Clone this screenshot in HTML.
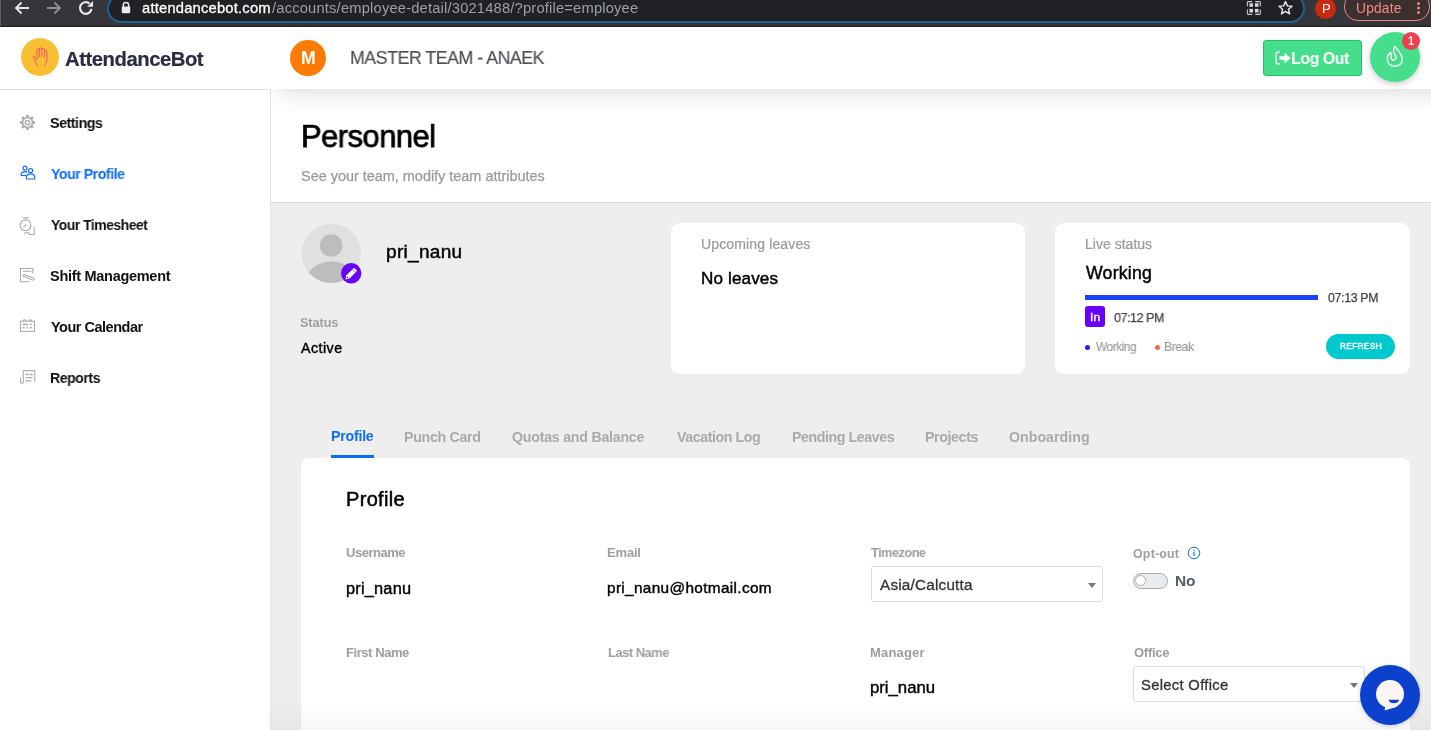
<!DOCTYPE html>
<html><head><meta charset="utf-8"><style>
html,body{margin:0;padding:0;width:1431px;height:730px;overflow:hidden;background:#fff;position:relative}
body{font-family:"Liberation Sans",sans-serif}
.t{position:absolute;white-space:nowrap;line-height:1;font-family:"Liberation Sans",sans-serif;will-change:transform}
</style></head><body>
<div style="position:absolute;left:0;top:0;width:1431px;height:26px;background:#35363a"></div>
<div style="position:absolute;left:0;top:26px;width:1431px;height:1px;background:#1d1d1f"></div>
<div style="position:absolute;left:0;top:0;width:1px;height:26px;background:#5c5d61"></div>
<div style="position:absolute;left:107px;top:-6px;width:1194px;height:25px;border:2px solid #1f6099;border-radius:14.5px;background:#202124"></div>
<svg style="position:absolute;left:0;top:0" width="110" height="26" viewBox="0 0 110 26">
<g fill="none" stroke="#e8eaed" stroke-width="1.8" stroke-linecap="butt">
<path d="M29 8H16M21.5 2.5L16 8l5.5 5.5"/>
</g>
<g fill="none" stroke="#8e9093" stroke-width="1.8">
<path d="M47 8H60M54.5 2.5L60 8l-5.5 5.5"/>
</g>
<path d="M91.5 8.9A5.8 5.8 0 1 1 89.5 3.5" fill="none" stroke="#e8eaed" stroke-width="2.2"/>
<path d="M93 1V6.8H87z" fill="#e8eaed"/>
</svg>
<svg style="position:absolute;left:120px;top:1px" width="12" height="13" viewBox="0 0 12 13">
<path d="M3.3 6V4.3a2.7 2.7 0 0 1 5.4 0V6" fill="none" stroke="#e8eaed" stroke-width="1.5"/>
<rect x="1.8" y="5.6" width="8.4" height="6.6" rx="1" fill="#e8eaed"/></svg>
<div class="t" style="left:142px;top:1px;font-size:14.72px;letter-spacing:0.212px;font-weight:normal;color:#ffffff;-webkit-text-stroke:0.3px #ffffff;">attendancebot.com</div>
<div class="t" style="left:271.5px;top:1px;font-size:14.72px;letter-spacing:0.18px;font-weight:normal;color:#9aa0a6;">/accounts/employee-detail/3021488/?profile=employee</div>
<svg style="position:absolute;left:1246px;top:0px" width="16" height="16" viewBox="0 0 16 16">
<g fill="none" stroke="#c8cacc" stroke-width="1.1"><path d="M1.4 6.3V2.4Q1.4 1.6 2.2 1.6H6.2M9.2 1.6H13.2Q14.3 1.6 14.3 2.4V6.3M14.3 9.4V13.6Q14.3 14.4 13.5 14.4H9.2M6.2 14.4H2.2Q1.4 14.4 1.4 13.6V9.4"/></g>
<g fill="#d4d6d8"><rect x="3.4" y="3.3" width="3.6" height="3.5"/><rect x="8.9" y="3.3" width="3.6" height="3.5"/><rect x="3.4" y="8.9" width="3.6" height="3.6"/><rect x="8.9" y="8.9" width="3.6" height="3.6"/></g></svg>
<svg style="position:absolute;left:1277px;top:0px" width="17" height="16" viewBox="0 0 17 16">
<path d="M8.5 1.6l1.9 4.3 4.6.4-3.5 3 1.1 4.5-4.1-2.4-4.1 2.4 1.1-4.5-3.5-3 4.6-.4z" fill="none" stroke="#e8eaed" stroke-width="1.4" stroke-linejoin="round"/></svg>
<div style="position:absolute;left:1315px;top:-2px;width:21px;height:21px;border-radius:50%;background:#c8290f"></div>
<div class="t" style="left:1321.5px;top:2px;font-size:13.04px;letter-spacing:1.0px;font-weight:normal;color:#ffffff;">P</div>
<div style="position:absolute;left:1344px;top:-8px;width:84px;height:27px;border:1.5px solid #ee8a80;border-radius:14px;background:#3b2f30"></div>
<div class="t" style="left:1356px;top:2px;font-size:13.77px;letter-spacing:0.2px;font-weight:normal;color:#f28b82;">Update</div>
<div style="position:absolute;left:1417px;top:2px;width:3px;height:3px;border-radius:50%;background:#ee8a80;box-shadow:0 4.5px 0 #ee8a80,0 9px 0 #ee8a80"></div>
<div style="position:absolute;left:0;top:27px;width:1431px;height:62px;background:#fff"></div>
<div style="position:absolute;left:0;top:89px;width:271px;height:1px;background:#e3e3e3"></div>
<div style="position:absolute;left:21px;top:38px;width:38px;height:38px;border-radius:50%;background:#f8bf35"></div>
<svg style="position:absolute;left:28px;top:42px" width="24" height="28" viewBox="0 0 24 28">
<g fill="none" stroke="#f2566a" stroke-width="1" stroke-linecap="round" stroke-linejoin="round">
<path d="M9.4 23.5L5.3 15.6C4.8 14.6 5.5 13.9 6.3 14.4C6.8 14.7 7.1 15.2 7.4 15.7L9 17.6V8.3C9 7.4 9.5 6.9 10.2 6.9C10.9 6.9 11.3 7.4 11.3 8.2C11.4 6.5 11.9 5.6 12.6 5.6C13.3 5.6 13.8 6.3 13.8 7.2C14 6.6 14.5 6.3 15.1 6.4C15.9 6.6 16.4 7.2 16.4 8.1C16.8 7.6 17.3 7.6 17.8 7.9C18.5 8.3 18.8 9 18.8 9.8L19 17.6C19 20 18 22 16.6 23.5"/>
<path d="M11.3 8.2V15M13.8 7.2V14.6M16.4 8.1V15.4"/>
</g></svg>
<div class="t" style="left:65px;top:49px;font-size:20.29px;letter-spacing:-0.467px;font-weight:bold;color:#2a2c44;-webkit-text-stroke:0.2px #2a2c44;">AttendanceBot</div>
<div style="position:absolute;left:290px;top:40px;width:36px;height:36px;border-radius:50%;background:#fd7b03"></div>
<div class="t" style="left:300.5px;top:50px;font-size:17.68px;letter-spacing:0.0px;font-weight:bold;color:#ffffff;">M</div>
<div class="t" style="left:349.8px;top:49px;font-size:18.41px;letter-spacing:-0.5px;font-weight:normal;color:#4a4e55;transform:scaleX(0.966);transform-origin:0 0;-webkit-text-stroke:0.15px #4a4e55;">MASTER TEAM - ANAEK</div>
<div style="position:absolute;left:1263px;top:40px;width:97px;height:34px;border:1px solid #1fc46c;border-radius:3px;background:#46de8b"></div>
<svg style="position:absolute;left:1275px;top:51px" width="17" height="14" viewBox="0 0 17 14">
<path d="M5 1.2H2.6C1.8 1.2 1.2 1.8 1.2 2.6v8.8c0 .8.6 1.4 1.4 1.4H5" fill="none" stroke="#fff" stroke-width="1.3"/>
<path d="M4.5 5.2h5V1.8l6 5.2-6 5.2V8.8h-5z" fill="#fff"/></svg>
<div class="t" style="left:1290.7px;top:50px;font-size:17.1px;letter-spacing:-0.5px;font-weight:bold;color:#ffffff;transform:scaleX(0.9344);transform-origin:0 0;">Log Out</div>
<div style="position:absolute;left:1370px;top:32px;width:50px;height:50px;border-radius:50%;background:#46de8b;box-shadow:0 2px 6px rgba(0,0,0,.22)"></div>
<svg style="position:absolute;left:1380px;top:40px" width="30" height="32" viewBox="0 0 30 32">
<path d="M15 6.5C17 10 22 13.5 22.3 19C22.5 23.5 19 26.3 15 26.3C10.5 26.3 7.3 23 7.3 19.3C7.3 15.8 9 13.5 11 12.5L11.2 17.8C11.4 19.3 12.3 20 13.5 20C15 20 16.2 18.8 16 17.5C15.7 15.5 13.6 13.2 13.5 11C13.4 9 14 7.5 15 6.5Z" fill="none" stroke="#fff" stroke-width="1.4" stroke-linejoin="round"/></svg>
<div style="position:absolute;left:1402px;top:32px;width:18px;height:18px;border-radius:50%;background:#ef3f4f"></div>
<div class="t" style="left:1407.5px;top:34px;font-size:13.04px;letter-spacing:-0.5px;font-weight:bold;color:#ffffff;transform:scaleX(0.8333);transform-origin:0 0;">1</div>
<div style="position:absolute;left:0;top:90px;width:270px;height:640px;background:#fff"></div>
<div style="position:absolute;left:270px;top:90px;width:1px;height:640px;background:#e2e2e2"></div>
<div class="t" style="left:49.6px;top:116px;font-size:14.49px;letter-spacing:-0.5px;font-weight:bold;color:#111111;transform:scaleX(0.9865);transform-origin:0 0;">Settings</div>
<div class="t" style="left:50.6px;top:167px;font-size:14.49px;letter-spacing:-0.5px;font-weight:bold;color:#0f6ef7;transform:scaleX(0.9787);transform-origin:0 0;">Your Profile</div>
<div class="t" style="left:51px;top:218px;font-size:14.49px;letter-spacing:-0.5px;font-weight:bold;color:#111111;transform:scaleX(0.9604);transform-origin:0 0;">Your Timesheet</div>
<div class="t" style="left:49.6px;top:269px;font-size:14.49px;letter-spacing:-0.28px;font-weight:bold;color:#111111;">Shift Management</div>
<div class="t" style="left:50.6px;top:320px;font-size:14.49px;letter-spacing:-0.484px;font-weight:bold;color:#111111;">Your Calendar</div>
<div class="t" style="left:49.6px;top:371px;font-size:14.49px;letter-spacing:-0.5px;font-weight:bold;color:#111111;transform:scaleX(0.976);transform-origin:0 0;">Reports</div>
<svg style="position:absolute;left:19px;top:114px" width="17" height="17" viewBox="0 0 17 17">
<g fill="#ababab"><rect x="7.15" y="0.9" width="2.7" height="3.2" transform="rotate(0 8.5 8.5)"/><rect x="7.15" y="0.9" width="2.7" height="3.2" transform="rotate(45 8.5 8.5)"/><rect x="7.15" y="0.9" width="2.7" height="3.2" transform="rotate(90 8.5 8.5)"/><rect x="7.15" y="0.9" width="2.7" height="3.2" transform="rotate(135 8.5 8.5)"/><rect x="7.15" y="0.9" width="2.7" height="3.2" transform="rotate(180 8.5 8.5)"/><rect x="7.15" y="0.9" width="2.7" height="3.2" transform="rotate(225 8.5 8.5)"/><rect x="7.15" y="0.9" width="2.7" height="3.2" transform="rotate(270 8.5 8.5)"/><rect x="7.15" y="0.9" width="2.7" height="3.2" transform="rotate(315 8.5 8.5)"/></g>
<circle cx="8.5" cy="8.5" r="5" fill="none" stroke="#ababab" stroke-width="1.6"/>
<circle cx="8.5" cy="8.5" r="2.2" fill="none" stroke="#ababab" stroke-width="1.3"/></svg>
<svg style="position:absolute;left:20px;top:165px" width="17" height="15" viewBox="0 0 17 15">
<g fill="none" stroke="#0f6ef7" stroke-width="1.2">
<circle cx="5" cy="3.2" r="2"/><path d="M1 10.5c0-2.3 1.8-3.8 4-3.8 1 0 1.8.3 2.4.8"/><path d="M1 10.5h5.5"/>
<circle cx="10.6" cy="5.6" r="2.1"/><path d="M6.4 14v-1.2c0-2.4 1.9-4 4.2-4s4.2 1.6 4.2 4V14z"/>
</g></svg>
<svg style="position:absolute;left:19px;top:215px" width="17" height="21" viewBox="0 0 17 21">
<g fill="none" stroke="#ababab" stroke-width="1.1">
<path d="M3.8 2.7H10.3M7 2.7V4.6"/><circle cx="6.5" cy="10.3" r="5.4"/><path d="M4.6 12L7.3 9.4"/>
<path d="M6 19.5V17.8H10V19.5H15.2V12"/>
</g></svg>
<svg style="position:absolute;left:19px;top:266px" width="17" height="17" viewBox="0 0 17 17">
<g fill="none" stroke="#ababab" stroke-width="1.1">
<path d="M10.5 15.7H1.5V2.5H14V7.5"/><path d="M3.8 5.3H12.5"/>
<path d="M5 8.4L14.6 12.1Q15.6 12.7 15 13.6Q14.5 14.3 13.6 13.9L4.4 10.3Z"/>
</g></svg>
<svg style="position:absolute;left:19px;top:317px" width="17" height="16" viewBox="0 0 17 16">
<g fill="none" stroke="#ababab" stroke-width="1.1">
<rect x="1.5" y="4.2" width="14" height="10.2"/><path d="M4 4.2a1.4 1.4 0 0 1 2.8 0M10 4.2a1.4 1.4 0 0 1 2.8 0"/>
</g><g fill="#ababab"><rect x="3.6" y="6.6" width="5.6" height="1.6"/><rect x="10.8" y="6.6" width="2" height="1.6"/><rect x="3.8" y="9.9" width="1.8" height="1.6"/><rect x="7.6" y="9.9" width="1.8" height="1.6"/><rect x="11.2" y="9.9" width="1.8" height="1.6"/></g></svg>
<svg style="position:absolute;left:19px;top:368px" width="17" height="17" viewBox="0 0 17 17">
<g fill="none" stroke="#ababab" stroke-width="1.1">
<path d="M1.6 9.5V14Q1.6 15.3 3 15.3Q4.3 15.3 4.3 14V2.6H15.8V14"/><path d="M6.5 6.4H10M6.5 9.6H13.5M6.5 12.9H12.5"/>
</g><rect x="11.4" y="5.4" width="2.2" height="2" fill="#ababab"/></svg>
<div style="position:absolute;left:271px;top:90px;width:1160px;height:640px;background:#eeeeee"></div>
<div style="position:absolute;left:271px;top:90px;width:1160px;height:112px;background:#fff;border-bottom:1px solid #dcdcdc"></div>
<div style="position:absolute;left:271px;top:89px;width:1160px;height:50px;overflow:hidden"><div style="position:absolute;left:8px;top:-30px;width:1300px;height:30px;background:#ccc;box-shadow:0 0 24px 2px rgba(0,0,0,.16)"></div></div>
<div class="t" style="left:301.2px;top:121px;font-size:31.16px;letter-spacing:-0.5px;font-weight:normal;color:#000000;transform:scaleX(0.991);transform-origin:0 0;-webkit-text-stroke:0.75px #000000;">Personnel</div>
<div class="t" style="left:301px;top:169px;font-size:14.49px;letter-spacing:-0.028px;font-weight:normal;color:#9a9a9a;-webkit-text-stroke:0.25px #9a9a9a;">See your team, modify team attributes</div>
<svg style="position:absolute;left:301px;top:223px" width="62" height="62" viewBox="0 0 62 62">
<defs><clipPath id="cav"><circle cx="30.2" cy="30.3" r="29.6"/></clipPath></defs>
<circle cx="30.2" cy="30.3" r="29.6" fill="#e0e0e0"/>
<g clip-path="url(#cav)"><circle cx="30.2" cy="22.5" r="11.3" fill="#bdbdbd"/><ellipse cx="30.2" cy="58" rx="25" ry="19.5" fill="#bdbdbd"/></g>
<circle cx="50.2" cy="50.2" r="10.2" fill="#6800fb"/>
<path d="M44.3 56.6L45.44 52.34L53.04 44.74L56.16 47.86L48.56 55.46Z" fill="#fff"/>
<path d="M51.5 46.3L54.6 49.4" stroke="#6800fb" stroke-width=".7"/><circle cx="46.4" cy="54.5" r=".75" fill="#6800fb"/>
</svg>
<div class="t" style="left:385.5px;top:242px;font-size:19.06px;letter-spacing:0.286px;font-weight:normal;color:#000000;-webkit-text-stroke:0.45px #000000;">pri_nanu</div>
<div class="t" style="left:300.3px;top:317px;font-size:12.61px;letter-spacing:-0.04px;font-weight:bold;color:#9e9e9e;">Status</div>
<div class="t" style="left:301.3px;top:341px;font-size:14.2px;letter-spacing:0.48px;font-weight:normal;color:#000000;-webkit-text-stroke:0.4px #000000;">Active</div>
<div style="position:absolute;left:671px;top:223px;width:354px;height:151px;background:#fff;border-radius:9px"></div>
<div class="t" style="left:700.7px;top:237px;font-size:14.06px;letter-spacing:0.115px;font-weight:normal;color:#9a9a9a;-webkit-text-stroke:0.2px #9a9a9a;">Upcoming leaves</div>
<div class="t" style="left:701.1px;top:270px;font-size:17.1px;letter-spacing:0.124px;font-weight:normal;color:#000000;-webkit-text-stroke:0.45px #000000;">No leaves</div>
<div style="position:absolute;left:1055px;top:223px;width:355px;height:151px;background:#fff;border-radius:9px"></div>
<div class="t" style="left:1084.5px;top:237px;font-size:14.06px;letter-spacing:0.0px;font-weight:normal;color:#9a9a9a;-webkit-text-stroke:0.2px #9a9a9a;">Live status</div>
<div class="t" style="left:1085.5px;top:265px;font-size:17.68px;letter-spacing:0.234px;font-weight:normal;color:#000000;-webkit-text-stroke:0.45px #000000;">Working</div>
<div style="position:absolute;left:1085px;top:295px;width:233px;height:5px;background:#1b3ffa"></div>
<div class="t" style="left:1327.8px;top:292px;font-size:12.32px;letter-spacing:-0.314px;font-weight:normal;color:#444444;-webkit-text-stroke:0.25px #444444;">07:13 PM</div>
<div style="position:absolute;left:1085px;top:306px;width:20px;height:21px;border-radius:3px;background:#6800fb"></div>
<div class="t" style="left:1089.8px;top:312px;font-size:11.38px;letter-spacing:0.2px;font-weight:normal;color:#ffffff;transform:scaleX(1.05);transform-origin:0 0;-webkit-text-stroke:0.35px #ffffff;">In</div>
<div class="t" style="left:1113.5px;top:311px;font-size:13.19px;letter-spacing:-0.5px;font-weight:normal;color:#444444;transform:scaleX(0.9519);transform-origin:0 0;-webkit-text-stroke:0.25px #444444;">07:12 PM</div>
<div style="position:absolute;left:1085px;top:345px;width:5px;height:5px;border-radius:50%;background:#2a1cf0"></div>
<div class="t" style="left:1095.7px;top:341px;font-size:12.75px;letter-spacing:-0.5px;font-weight:normal;color:#9a9a9a;transform:scaleX(0.9326);transform-origin:0 0;-webkit-text-stroke:0.15px #9a9a9a;">Working</div>
<div style="position:absolute;left:1155px;top:345px;width:5px;height:5px;border-radius:50%;background:#f7693a"></div>
<div class="t" style="left:1164px;top:341px;font-size:12.75px;letter-spacing:-0.5px;font-weight:normal;color:#9a9a9a;transform:scaleX(0.96);transform-origin:0 0;-webkit-text-stroke:0.15px #9a9a9a;">Break</div>
<div style="position:absolute;left:1326px;top:334px;width:69px;height:25px;border-radius:13px;background:#00c8cf"></div>
<div class="t" style="left:1339.8px;top:341px;font-size:9.86px;letter-spacing:0.5px;font-weight:normal;color:#ffffff;transform:scaleX(0.83);transform-origin:0 0;-webkit-text-stroke:0.5px #ffffff;">REFRESH</div>
<div class="t" style="left:330.7px;top:429px;font-size:14.2px;letter-spacing:-0.233px;font-weight:bold;color:#0f6ef7;">Profile</div>
<div class="t" style="left:403.6px;top:430px;font-size:14.2px;letter-spacing:-0.289px;font-weight:bold;color:#aaaaaa;">Punch Card</div>
<div class="t" style="left:512px;top:430px;font-size:14.2px;letter-spacing:-0.235px;font-weight:bold;color:#aaaaaa;">Quotas and Balance</div>
<div class="t" style="left:676.8px;top:430px;font-size:14.2px;letter-spacing:-0.418px;font-weight:bold;color:#aaaaaa;">Vacation Log</div>
<div class="t" style="left:791.6px;top:430px;font-size:14.2px;letter-spacing:-0.415px;font-weight:bold;color:#aaaaaa;">Pending Leaves</div>
<div class="t" style="left:925px;top:430px;font-size:14.2px;letter-spacing:-0.372px;font-weight:bold;color:#aaaaaa;">Projects</div>
<div class="t" style="left:1009.3px;top:430px;font-size:14.2px;letter-spacing:0.022px;font-weight:bold;color:#aaaaaa;">Onboarding</div>
<div style="position:absolute;left:331px;top:455px;width:43px;height:3px;background:#0b6cf7"></div>
<div style="position:absolute;left:301px;top:458px;width:1109px;height:300px;background:#fff;border-radius:8px 8px 0 0"></div>
<div class="t" style="left:346px;top:489px;font-size:20.0px;letter-spacing:0.333px;font-weight:normal;color:#000000;-webkit-text-stroke:0.5px #000000;">Profile</div>
<div class="t" style="left:345.7px;top:546px;font-size:13.04px;letter-spacing:-0.486px;font-weight:bold;color:#9e9e9e;">Username</div>
<div class="t" style="left:345.7px;top:580px;font-size:16.42px;letter-spacing:0.171px;font-weight:normal;color:#000000;-webkit-text-stroke:0.4px #000000;">pri_nanu</div>
<div class="t" style="left:607.4px;top:546px;font-size:13.04px;letter-spacing:-0.2px;font-weight:bold;color:#9e9e9e;">Email</div>
<div class="t" style="left:607.4px;top:580px;font-size:15.36px;letter-spacing:0.337px;font-weight:normal;color:#000000;-webkit-text-stroke:0.4px #000000;">pri_nanu@hotmail.com</div>
<div class="t" style="left:871.3px;top:546px;font-size:13.04px;letter-spacing:-0.5px;font-weight:bold;color:#9e9e9e;transform:scaleX(0.9768);transform-origin:0 0;">Timezone</div>
<div class="t" style="left:1133px;top:548px;font-size:12.46px;letter-spacing:0.167px;font-weight:bold;color:#9e9e9e;">Opt-out</div>
<div class="t" style="left:1174.7px;top:573px;font-size:15.51px;letter-spacing:-0.2px;font-weight:bold;color:#545d68;">No</div>
<div class="t" style="left:345.7px;top:646px;font-size:13.04px;letter-spacing:-0.444px;font-weight:bold;color:#9e9e9e;">First Name</div>
<div class="t" style="left:607.5px;top:646px;font-size:13.04px;letter-spacing:-0.5px;font-weight:bold;color:#9e9e9e;transform:scaleX(0.9918);transform-origin:0 0;">Last Name</div>
<div class="t" style="left:869.8px;top:646px;font-size:13.04px;letter-spacing:0.167px;font-weight:bold;color:#9e9e9e;">Manager</div>
<div class="t" style="left:869.8px;top:680px;font-size:16.79px;letter-spacing:-0.029px;font-weight:normal;color:#000000;-webkit-text-stroke:0.4px #000000;">pri_nanu</div>
<div class="t" style="left:1133.5px;top:646px;font-size:13.04px;letter-spacing:-0.28px;font-weight:bold;color:#9e9e9e;">Office</div>
<div style="position:absolute;left:871px;top:566px;width:230px;height:34px;border:1px solid #dcdcdc;border-radius:3px;background:#fff"></div>
<div class="t" style="left:879.6px;top:577px;font-size:15.22px;letter-spacing:0.234px;font-weight:normal;color:#333333;-webkit-text-stroke:0.3px #333333;">Asia/Calcutta</div>
<div style="position:absolute;left:1088px;top:583px;width:0;height:0;border-left:4px solid transparent;border-right:4px solid transparent;border-top:5px solid #777"></div>
<svg style="position:absolute;left:1187px;top:546px" width="14" height="14" viewBox="0 0 14 14">
<circle cx="7" cy="7" r="5.8" fill="none" stroke="#0f6ef7" stroke-width="1"/><rect x="6.4" y="5.8" width="1.2" height="4.4" fill="#0f6ef7"/><circle cx="7" cy="4.2" r=".75" fill="#0f6ef7"/></svg>
<div style="position:absolute;left:1133px;top:573px;width:33px;height:14px;border:1px solid #a9adb2;border-radius:8px;background:#e9ecef"></div>
<div style="position:absolute;left:1135px;top:575px;width:9px;height:9px;border:1px solid #a9adb2;border-radius:50%;background:#fff;box-sizing:border-box;width:11px;height:11px"></div>
<div style="position:absolute;left:1133px;top:666px;width:230px;height:34px;border:1px solid #dcdcdc;border-radius:3px;background:#fff"></div>
<div class="t" style="left:1140.7px;top:678px;font-size:14.78px;letter-spacing:0.317px;font-weight:normal;color:#333333;-webkit-text-stroke:0.3px #333333;">Select Office</div>
<div style="position:absolute;left:1350px;top:683px;width:0;height:0;border-left:4px solid transparent;border-right:4px solid transparent;border-top:5px solid #777"></div>
<div style="position:absolute;left:271px;top:700px;width:1160px;height:30px;background:linear-gradient(rgba(0,0,0,0),rgba(0,0,0,.035))"></div>
<div style="position:absolute;left:1360px;top:665px;width:60px;height:60px;border-radius:50%;background:#0b41cd;box-shadow:0 1px 4px rgba(0,0,0,.2)"></div>
<svg style="position:absolute;left:1355px;top:660px" width="70" height="70" viewBox="0 0 70 70">
<circle cx="35" cy="34.1" r="14" fill="#fbf6f4"/><path d="M30.5 45.5L29.6 50.6L43 46.5Z" fill="#fbf6f4"/>
<path d="M33.6 39.8H44.1A5.25 3.4 0 0 1 33.6 39.8Z" fill="#0b41cd"/></svg>
</body></html>
